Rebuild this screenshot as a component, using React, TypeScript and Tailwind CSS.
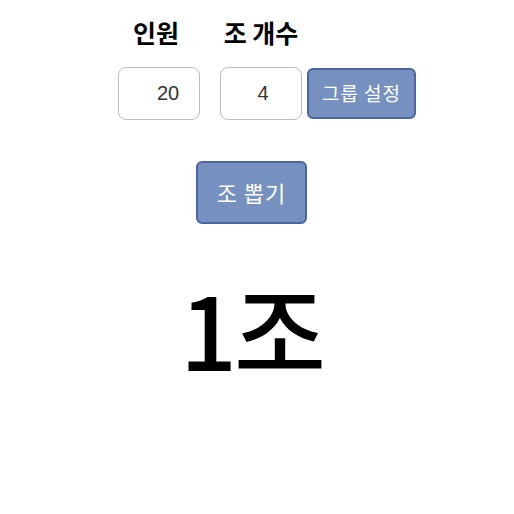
export default function App() {
  return (
    <div className="w-[514px] h-[514px] bg-white flex flex-col items-center" style={{ fontFamily: '"Noto Sans CJK KR", "Noto Sans", sans-serif' }}>
      <div className="flex items-end gap-[5px] mt-[13px] pl-[20px]">
        <div className="flex items-end gap-[20px]">
          <div className="flex flex-col items-center">
            <div className="text-[25px] font-bold leading-[38px] text-black pr-[6px]">인원</div>
            <input
              readOnly
              value="20"
              className="mt-[16px] w-[82px] h-[53px] rounded-[8px] border border-[#bdbdbd] text-center pl-[18px] text-[20px] text-[#333] outline-none"
              style={{ fontFamily: '"Liberation Sans", Arial, sans-serif' }}
            />
          </div>
          <div className="flex flex-col items-center">
            <div className="text-[25px] font-bold leading-[38px] text-black">조 개수</div>
            <input
              readOnly
              value="4"
              className="mt-[16px] w-[82px] h-[53px] rounded-[8px] border border-[#bdbdbd] text-center pl-[4px] text-[20px] text-[#333] outline-none"
              style={{ fontFamily: '"Liberation Sans", Arial, sans-serif' }}
            />
          </div>
        </div>
        <button className="w-[109px] h-[51px] mb-[1px] rounded-[6px] bg-[#7690c0] border-2 border-[#4e64a0] text-white text-[19px] tracking-[1px]">
          그룹 설정
        </button>
      </div>
      <div className="flex flex-col items-center pr-[11px]">
        <button className="mt-[41px] w-[111px] h-[63px] rounded-[6px] bg-[#7690c0] border-2 border-[#4e64a0] text-white text-[22px] tracking-[1px]">
          조 뽑기
        </button>
        <div className="mt-[44px] text-[100px] font-medium leading-[120px] text-black tracking-[-3px]">1조</div>
      </div>
    </div>
  );
}
